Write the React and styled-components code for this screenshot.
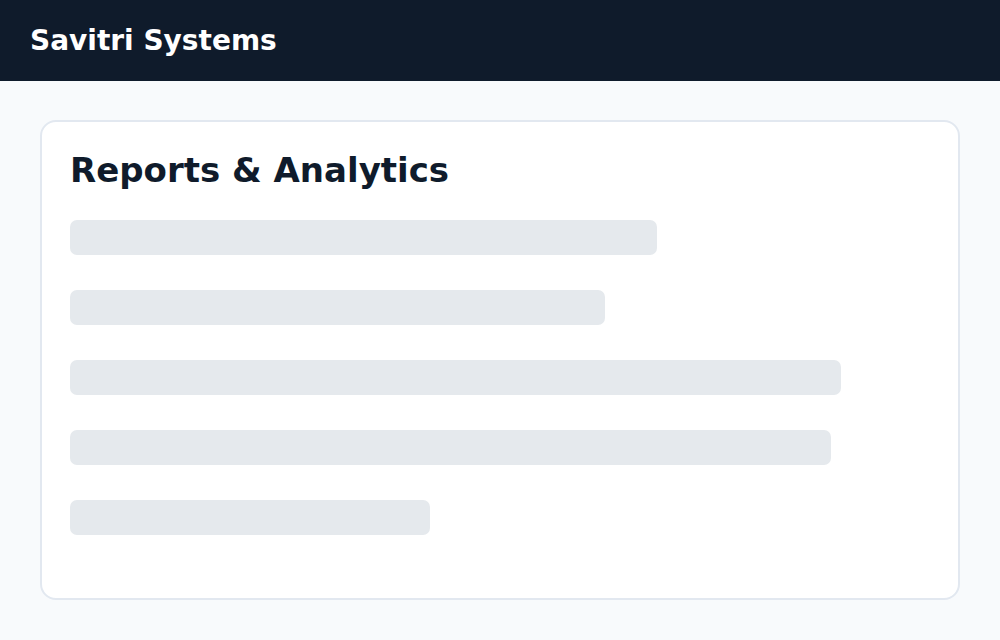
import React from 'react'
import styled, { createGlobalStyle } from 'styled-components'

const GlobalStyle = createGlobalStyle`
	html, body {
		margin: 0;
		padding: 0;
		background: #f8fafc;
		font-family: "DejaVu Sans", "Liberation Sans", sans-serif;
	}
`

const Header = styled.header`
	height: 81px;
	background: #0f1b2b;
	display: flex;
	align-items: center;
	padding: 0 30px;
	box-sizing: border-box;
`

const Brand = styled.h1`
	margin: 0;
	color: #ffffff;
	font-size: 28px;
	font-weight: 700;
`

const Main = styled.main`
	padding: 39px 40px 40px;
`

const Card = styled.section`
	background: #ffffff;
	border: 2px solid #e2e8f0;
	border-radius: 16px;
	padding: 28px 28px 30px;
	box-sizing: border-box;
	height: 480px;
`

const Title = styled.h2`
	margin: 0 0 30px;
	color: #0f1b2b;
	font-size: 34px;
	font-weight: 700;
	line-height: 40px;
`

const Bars = styled.div`
	display: flex;
	flex-direction: column;
	gap: 35px;
`

const Bar = styled.div`
	height: 35px;
	width: ${p => p.$w}px;
	background: #e5e9ed;
	border-radius: 7px;
`

const widths = [587, 535, 771, 761, 360]

export default function App () {
	return (
		<>
			<GlobalStyle />
			<Header>
				<Brand>Savitri Systems</Brand>
			</Header>
			<Main>
				<Card>
					<Title>Reports &amp; Analytics</Title>
					<Bars>
						{widths.map((w, i) => <Bar key={i} $w={w} />)}
					</Bars>
				</Card>
			</Main>
		</>
	)
}
